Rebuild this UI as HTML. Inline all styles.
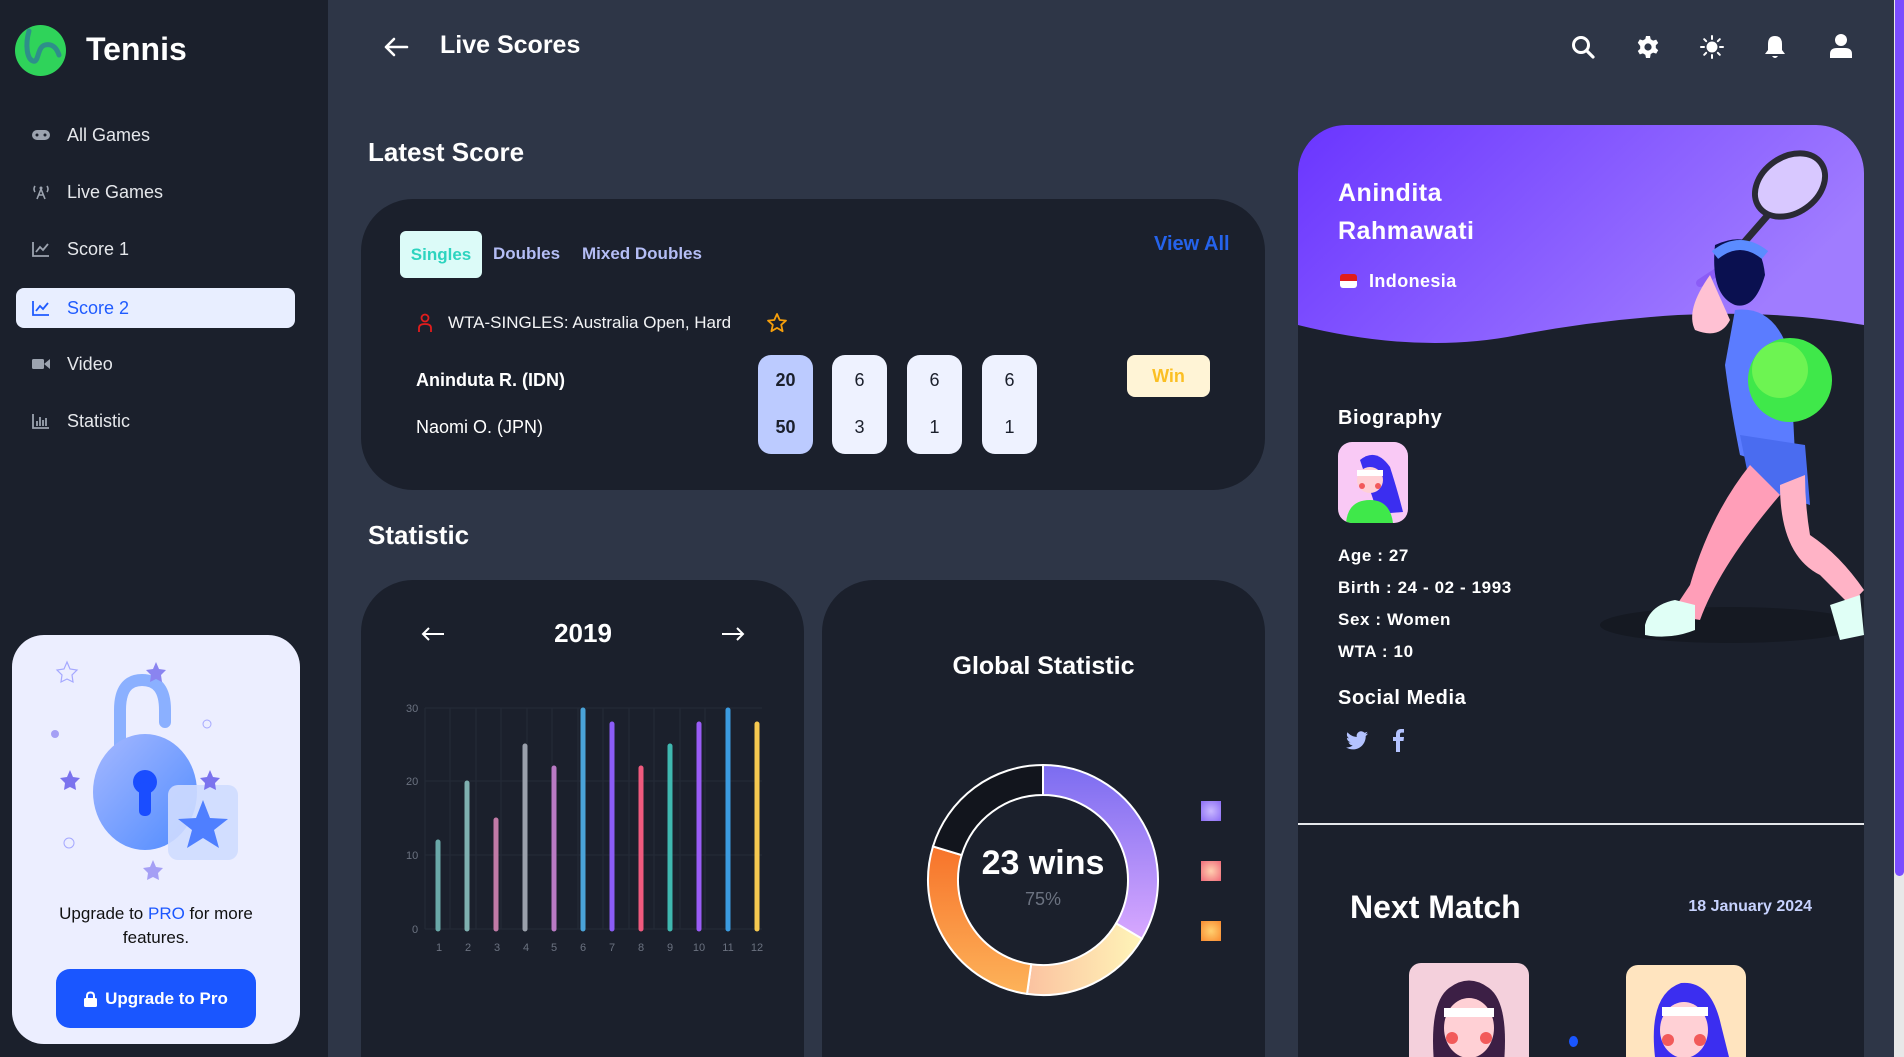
<!DOCTYPE html>
<html style="width:1904px;height:1057px;overflow:hidden"><head><meta charset="utf-8"><style>
*{margin:0;padding:0;box-sizing:border-box}
body{width:1904px;height:1057px;overflow:hidden;background:#2e3647;font-family:"Liberation Sans",sans-serif;color:#fff;position:relative}
.a{position:absolute}
.side{left:0;top:0;width:328px;height:1057px;background:#1b202c}
.nav{left:16px;width:279px;height:40px;border-radius:8px;display:flex;align-items:center;padding-left:16px;font-size:18px;color:#e5e7eb}
.nav svg{margin-right:17px}
.card{background:#1b202c}
.sb{width:55px;height:99px;border-radius:13px;background:#eef2ff;color:#1b202c;font-size:18px;text-align:center}
.sb div{position:absolute;left:0;width:100%}
.bio{left:1338px;font-size:17px;font-weight:bold;letter-spacing:.6px}
</style></head><body>
<div class="a side"></div>
<svg class="a" style="left:15px;top:25px" width="51" height="51" viewBox="0 0 51 51"><circle cx="25.5" cy="25.5" r="25.5" fill="#2fd35a"/><path d="M14 6 C10 20 12 34 18 36 C24 38 22 22 30 20 C38 18 42 24 44 30" stroke="#2e8f8a" stroke-width="5" fill="none" stroke-linecap="round"/></svg>
<div class="a" style="left:86px;top:31px;font-size:32px;font-weight:bold">Tennis</div>
<div class="a nav" style="top:115px"><svg width="18" height="12" viewBox="0 0 18 12"><rect x="0" y="1" width="18" height="10" rx="5" fill="#9ca3af"/><circle cx="5" cy="6" r="1.5" fill="#1b202c"/><circle cx="13" cy="6" r="1.5" fill="#1b202c"/></svg>All Games</div>
<div class="a nav" style="top:172px"><svg width="18" height="16" viewBox="0 0 18 16"><path d="M9 5 L5 15 M9 5 L13 15 M6.5 11 H11.5 M3 2 Q1 5 3 8 M15 2 Q17 5 15 8" stroke="#9ca3af" stroke-width="1.6" fill="none"/><circle cx="9" cy="4" r="1.5" fill="#9ca3af"/></svg>Live Games</div>
<div class="a nav" style="top:229px"><svg width="18" height="16" viewBox="0 0 18 16"><path d="M1 1 V15 H17 M4 11 L8 6 L11 9 L16 3" stroke="#9ca3af" stroke-width="1.8" fill="none"/></svg>Score 1</div>
<div class="a nav" style="top:288px;background:#e8eeff;color:#1f5bff"><svg width="18" height="16" viewBox="0 0 18 16"><path d="M1 1 V15 H17 M4 11 L8 6 L11 9 L16 3" stroke="#1f5bff" stroke-width="1.8" fill="none"/></svg>Score 2</div>
<div class="a nav" style="top:344px"><svg width="18" height="14" viewBox="0 0 18 14"><rect x="0" y="2" width="12" height="10" rx="1.5" fill="#9ca3af"/><path d="M12 7 L18 2 V12 Z" fill="#9ca3af"/></svg>Video</div>
<div class="a nav" style="top:401px"><svg width="18" height="16" viewBox="0 0 18 16"><path d="M1 1 V15 H17" stroke="#9ca3af" stroke-width="1.8" fill="none"/><path d="M5 13V8M8 13V4M11 13V7M14 13V5" stroke="#9ca3af" stroke-width="1.8"/></svg>Statistic</div>
<div class="a" style="left:12px;top:635px;width:288px;height:409px;border-radius:32px;background:#eceeff"></div>
<svg class="a" style="left:40px;top:650px" width="230" height="240" viewBox="0 0 230 240">
<defs><linearGradient id="lk" x1="0" y1="0" x2="1" y2="1"><stop offset="0" stop-color="#a5b8ff"/><stop offset="1" stop-color="#4f8bff"/></linearGradient></defs>
<path d="M80 130 V60 Q80 30 102 30 Q125 30 125 60 V72" stroke="#8bb0ff" stroke-width="12" fill="none" stroke-linecap="round"/>
<ellipse cx="105" cy="142" rx="52" ry="58" fill="url(#lk)"/>
<circle cx="105" cy="132" r="12" fill="#1a4dff"/><rect x="99" y="132" width="12" height="34" rx="5" fill="#1a4dff"/>
<rect x="128" y="135" width="70" height="75" rx="10" fill="#cfdcff" opacity=".9"/>
<path d="M163 150 L170 168 L188 169 L174 180 L179 198 L163 188 L147 198 L152 180 L138 169 L156 168 Z" fill="#4f7fff"/>
<path d="M27 12 l3 7 7 1 -5 5 1 7 -6 -3 -6 3 1 -7 -5 -5 7 -1z" fill="none" stroke="#a5a8ff" stroke-width="1.2"/>
<path d="M116 12 l3 7 7 1 -5 5 1 7 -6 -3 -6 3 1 -7 -5 -5 7 -1z" fill="#8a84f0"/>
<path d="M30 120 l3 7 7 1 -5 5 1 7 -6 -3 -6 3 1 -7 -5 -5 7 -1z" fill="#7b73ee"/>
<path d="M170 120 l3 7 7 1 -5 5 1 7 -6 -3 -6 3 1 -7 -5 -5 7 -1z" fill="#7b73ee"/>
<path d="M113 210 l3 7 7 1 -5 5 1 7 -6 -3 -6 3 1 -7 -5 -5 7 -1z" fill="#a59ff5"/>
<circle cx="15" cy="84" r="4" fill="#a59ff5"/><circle cx="167" cy="74" r="4" fill="none" stroke="#a5a8ff"/><circle cx="29" cy="193" r="5" fill="none" stroke="#a5a8ff"/>
</svg>
<div class="a" style="left:12px;width:288px;top:902px;text-align:center;font-size:17px;line-height:24px;color:#111">Upgrade to <span style="color:#1a56ff">PRO</span> for more<br>features.</div>
<div class="a" style="left:56px;top:969px;width:200px;height:59px;border-radius:14px;background:#1a56ff;display:flex;align-items:center;justify-content:center;font-size:17px;font-weight:bold"><svg width="13" height="16" viewBox="0 0 13 16" style="margin-right:8px"><rect x="0" y="7" width="13" height="9" rx="1.5" fill="#fff"/><path d="M3 7 V5 Q3 1.5 6.5 1.5 Q10 1.5 10 5 V7" stroke="#fff" stroke-width="2" fill="none"/></svg>Upgrade to Pro</div>
<svg class="a" style="left:383px;top:37px" width="26" height="20" viewBox="0 0 26 20"><path d="M24 10 H3 M11 2 L3 10 L11 18" stroke="#fff" stroke-width="2.6" fill="none" stroke-linecap="round" stroke-linejoin="round"/></svg>
<div class="a" style="left:440px;top:31px;font-size:25px;font-weight:bold">Live Scores</div>
<svg class="a" style="left:1570px;top:34px" width="26" height="26" viewBox="0 0 26 26"><circle cx="11" cy="11" r="7.5" stroke="#fff" stroke-width="3" fill="none"/><path d="M16.5 16.5 L23 23" stroke="#fff" stroke-width="3.2" stroke-linecap="round"/></svg>
<svg class="a" style="left:1636px;top:35px" width="24" height="24" viewBox="0 0 24 24"><path d="M10 1h4l.7 3.2 2.4 1.4 3.1-1 2 3.4-2.4 2.2v2.8l2.4 2.2-2 3.4-3.1-1-2.4 1.4L14 23h-4l-.7-3.2-2.4-1.4-3.1 1-2-3.4 2.4-2.2v-2.8L1.8 7.8l2-3.4 3.1 1 2.4-1.4z" fill="#fff"/><circle cx="12" cy="12" r="3.6" fill="#2e3647"/></svg>
<svg class="a" style="left:1700px;top:35px" width="24" height="24" viewBox="0 0 24 24"><circle cx="12" cy="12" r="5.5" fill="#fff"/><path d="M12 1v3M12 20v3M1 12h3M20 12h3M4.2 4.2l2 2M17.8 17.8l2 2M4.2 19.8l2-2M17.8 6.2l2-2" stroke="#fff" stroke-width="2" stroke-linecap="round"/></svg>
<svg class="a" style="left:1763px;top:34px" width="24" height="26" viewBox="0 0 24 26"><path d="M12 2 Q19 2 19 10 V16 L22 20 H2 L5 16 V10 Q5 2 12 2Z" fill="#fff"/><path d="M9 22 Q12 26 15 22Z" fill="#fff"/></svg>
<svg class="a" style="left:1829px;top:33px" width="24" height="26" viewBox="0 0 24 26"><circle cx="12" cy="7" r="6" fill="#fff"/><path d="M1 25 V21 Q1 15 8 15 H16 Q23 15 23 21 V25Z" fill="#fff"/></svg>
<div class="a" style="left:368px;top:137px;font-size:26px;font-weight:bold">Latest Score</div>
<div class="a card" style="left:361px;top:199px;width:904px;height:291px;border-radius:52px"></div>
<div class="a" style="left:400px;top:231px;width:82px;height:47px;border-radius:6px;background:#dcfbf8;color:#2dd4bf;font-size:17px;font-weight:bold;text-align:center;line-height:47px">Singles</div>
<div class="a" style="left:493px;top:244px;font-size:17px;font-weight:bold;color:#b4bdf5">Doubles</div>
<div class="a" style="left:582px;top:244px;font-size:17px;font-weight:bold;color:#b4bdf5">Mixed Doubles</div>
<div class="a" style="left:1154px;top:233px;font-size:20px;font-weight:bold;color:#2563eb">View All</div>
<svg class="a" style="left:417px;top:313px" width="16" height="20" viewBox="0 0 16 20"><circle cx="8" cy="5" r="3.5" stroke="#e11d1d" stroke-width="1.8" fill="none"/><path d="M2 19 V15 Q2 11 8 11 Q14 11 14 15 V19" stroke="#e11d1d" stroke-width="1.8" fill="none"/></svg>
<div class="a" style="left:448px;top:313px;font-size:17px;color:#f3f4f6">WTA-SINGLES: Australia Open, Hard</div>
<svg class="a" style="left:766px;top:312px" width="22" height="22" viewBox="0 0 22 22"><path d="M11 2 l2.7 6 6.3 .6 -4.8 4.2 1.4 6.4 -5.6 -3.3 -5.6 3.3 1.4 -6.4 -4.8 -4.2 6.3 -.6z" fill="none" stroke="#f59e0b" stroke-width="1.8" stroke-linejoin="round"/></svg>
<div class="a" style="left:416px;top:370px;font-size:18px;font-weight:bold">Aninduta R. (IDN)</div>
<div class="a" style="left:416px;top:417px;font-size:18px">Naomi O. (JPN)</div>
<div class="a sb" style="left:758px;top:355px;background:#bccbff;font-weight:bold"><div style="top:15px">20</div><div style="top:62px">50</div></div>
<div class="a sb" style="left:832px;top:355px"><div style="top:15px">6</div><div style="top:62px">3</div></div>
<div class="a sb" style="left:907px;top:355px"><div style="top:15px">6</div><div style="top:62px">1</div></div>
<div class="a sb" style="left:982px;top:355px"><div style="top:15px">6</div><div style="top:62px">1</div></div>
<div class="a" style="left:1127px;top:355px;width:83px;height:42px;border-radius:8px;background:#fff4d6;color:#fbbf24;font-size:18px;font-weight:bold;text-align:center;line-height:42px">Win</div>
<div class="a" style="left:368px;top:520px;font-size:26px;font-weight:bold">Statistic</div>
<div class="a card" style="left:361px;top:580px;width:443px;height:477px;border-radius:52px 52px 0 0"></div>
<div class="a card" style="left:822px;top:580px;width:443px;height:477px;border-radius:52px 52px 0 0"></div>
<svg class="a" style="left:420px;top:624px" width="26" height="20" viewBox="0 0 26 20"><path d="M24 10 H3 M9 4 L3 10 L9 16" stroke="#fff" stroke-width="2" fill="none"/></svg>
<svg class="a" style="left:720px;top:624px" width="26" height="20" viewBox="0 0 26 20"><path d="M2 10 H23 M17 4 L23 10 L17 16" stroke="#fff" stroke-width="2" fill="none"/></svg>
<div class="a" style="left:533px;top:618px;width:100px;text-align:center;font-size:26px;font-weight:bold">2019</div>
<svg class="a" style="left:390px;top:690px" width="380" height="270" viewBox="0 0 380 270">
<g stroke="#252b38" stroke-width="1"><line x1="35" y1="18" x2="372" y2="18"/><line x1="35" y1="91" x2="372" y2="91"/><line x1="35" y1="165" x2="372" y2="165"/><line x1="35" y1="239" x2="372" y2="239"/>
<line x1="35" y1="18" x2="35" y2="239"/><line x1="60" y1="18" x2="60" y2="239"/><line x1="86" y1="18" x2="86" y2="239"/><line x1="111" y1="18" x2="111" y2="239"/><line x1="137" y1="18" x2="137" y2="239"/><line x1="162" y1="18" x2="162" y2="239"/><line x1="188" y1="18" x2="188" y2="239"/><line x1="213" y1="18" x2="213" y2="239"/><line x1="239" y1="18" x2="239" y2="239"/><line x1="264" y1="18" x2="264" y2="239"/><line x1="290" y1="18" x2="290" y2="239"/><line x1="315" y1="18" x2="315" y2="239"/><line x1="340" y1="18" x2="340" y2="239"/></g>
<g font-size="11" fill="#6b7280" font-family="Liberation Sans"><text x="16" y="22">30</text><text x="16" y="95">20</text><text x="16" y="169">10</text><text x="22" y="243">0</text></g>
<g stroke-width="5" stroke-linecap="round">
<line x1="48" y1="239" x2="48" y2="152" stroke="#6aa8a8"/>
<line x1="77" y1="239" x2="77" y2="93" stroke="#7fb0b0"/>
<line x1="106" y1="239" x2="106" y2="130" stroke="#c07aa6"/>
<line x1="135" y1="239" x2="135" y2="56" stroke="#9aa0ab"/>
<line x1="164" y1="239" x2="164" y2="78" stroke="#b97ac4"/>
<line x1="193" y1="239" x2="193" y2="20" stroke="#4aa3d8"/>
<line x1="222" y1="239" x2="222" y2="34" stroke="#8b5cf6"/>
<line x1="251" y1="239" x2="251" y2="78" stroke="#f05a7e"/>
<line x1="280" y1="239" x2="280" y2="56" stroke="#3fb8b0"/>
<line x1="309" y1="239" x2="309" y2="34" stroke="#9a5cf6"/>
<line x1="338" y1="239" x2="338" y2="20" stroke="#3b9be0"/>
<line x1="367" y1="239" x2="367" y2="34" stroke="#f6c950"/></g>
<g font-size="11" fill="#6b7280" font-family="Liberation Sans" text-anchor="middle"><text x="49" y="261">1</text><text x="78" y="261">2</text><text x="107" y="261">3</text><text x="136" y="261">4</text><text x="164" y="261">5</text><text x="193" y="261">6</text><text x="222" y="261">7</text><text x="251" y="261">8</text><text x="280" y="261">9</text><text x="309" y="261">10</text><text x="338" y="261">11</text><text x="367" y="261">12</text></g>
</svg>
<div class="a" style="left:822px;width:443px;top:652px;text-align:center;font-size:25px;font-weight:bold">Global Statistic</div>
<svg class="a" style="left:923px;top:760px" width="240" height="240" viewBox="-120 -120 240 240">
<defs>
<linearGradient id="gp" x1="0" y1="0" x2="0" y2="1"><stop offset="0" stop-color="#7b6cf0"/><stop offset="1" stop-color="#d8a8ff"/></linearGradient>
<linearGradient id="gy" x1="1" y1="0" x2="0" y2="0"><stop offset="0" stop-color="#fff5b8"/><stop offset="1" stop-color="#fbc2a0"/></linearGradient>
<linearGradient id="go" x1="0" y1="0" x2="0" y2="1"><stop offset="0" stop-color="#f7732a"/><stop offset="1" stop-color="#fdb35a"/></linearGradient>
</defs>
<g stroke="#fff" stroke-width="2">
<path d="M0 -115 A115 115 0 0 1 98.9 58.7 L73.1 43.4 A85 85 0 0 0 0 -85Z" fill="url(#gp)"/>
<path d="M98.9 58.7 A115 115 0 0 1 -16 113.9 L-11.8 84.2 A85 85 0 0 0 73.1 43.4Z" fill="url(#gy)"/>
<path d="M-16 113.9 A115 115 0 0 1 -110 -33.6 L-81.3 -24.9 A85 85 0 0 0 -11.8 84.2Z" fill="url(#go)"/>
<path d="M-110 -33.6 A115 115 0 0 1 0 -115 L0 -85 A85 85 0 0 0 -81.3 -24.9Z" fill="#12151d"/>
</g></svg>
<div class="a" style="left:943px;width:200px;top:844px;text-align:center;font-size:34px;font-weight:bold">23 wins</div>
<div class="a" style="left:943px;width:200px;top:889px;text-align:center;font-size:18px;color:#6b7280">75%</div>
<div class="a" style="left:1201px;top:801px;width:20px;height:20px;background:radial-gradient(#c9b8ff,#8b6cf5)"></div>
<div class="a" style="left:1201px;top:861px;width:20px;height:20px;background:radial-gradient(#ffd0b0,#f06a7a)"></div>
<div class="a" style="left:1201px;top:921px;width:20px;height:20px;background:radial-gradient(#ffd070,#f98a30)"></div>
<div class="a card" style="left:1298px;top:125px;width:566px;height:932px;border-radius:48px 48px 0 0;overflow:hidden">
<svg width="566" height="240" viewBox="0 0 566 240" style="position:absolute;left:0;top:0"><defs><linearGradient id="pu" x1="0" y1="0" x2="1" y2="0.4"><stop offset="0" stop-color="#6a35ff"/><stop offset="1" stop-color="#a07cff"/></linearGradient></defs><path d="M0 0 H566 V200 Q480 185 380 190 Q300 195 220 210 Q120 230 0 200Z" fill="url(#pu)"/></svg>
</div>
<div class="a" style="left:1298px;top:823px;width:566px;height:2px;background:#e5e7eb"></div>
<div class="a" style="left:1338px;top:174px;font-size:25px;font-weight:bold;line-height:38px;letter-spacing:.5px">Anindita<br>Rahmawati</div>
<div class="a" style="left:1340px;top:274px;width:17px;height:14px;border-radius:3px;overflow:hidden"><div style="height:7px;background:#e11d1d"></div><div style="height:7px;background:#fff"></div></div>
<div class="a" style="left:1369px;top:271px;font-size:18px;font-weight:bold;letter-spacing:.4px">Indonesia</div>
<svg class="a" style="left:1590px;top:135px" width="274" height="520" viewBox="0 0 274 520">
<ellipse cx="140" cy="490" rx="130" ry="18" fill="#151922"/>
<ellipse cx="200" cy="50" rx="38" ry="28" transform="rotate(-35 200 50)" fill="#d8c8ff" stroke="#2a2a35" stroke-width="6"/>
<path d="M178 80 L130 135" stroke="#2a2a35" stroke-width="7"/>
<path d="M130 135 L110 148" stroke="#8b5cf6" stroke-width="8" stroke-linecap="round"/>
<path d="M120 140 Q95 175 105 195 Q130 205 140 185" fill="#ffc1d3"/>
<path d="M125 110 Q170 90 175 140 Q165 175 145 170 Q120 160 125 110Z" fill="#0a1050"/>
<path d="M125 120 Q150 100 175 120" stroke="#5b8cff" stroke-width="10" fill="none"/>
<path d="M145 175 Q185 170 200 220 L205 320 Q175 330 150 320 Q140 270 135 230Z" fill="#5b7cff"/>
<circle cx="200" cy="245" r="42" fill="#3fe84a"/><circle cx="190" cy="235" r="28" fill="#9bff5a" opacity=".5"/>
<path d="M150 300 L215 310 L220 370 L160 350Z" fill="#4a6cf0"/>
<path d="M160 330 Q120 380 100 450 L80 480 L110 485 Q130 430 190 360Z" fill="#ff9eb8"/>
<path d="M190 350 Q190 420 230 440 L260 470 L274 455 Q250 420 220 400 Q215 370 215 340Z" fill="#ffb3c6"/>
<path d="M55 490 Q60 470 85 465 L105 470 L105 495 Q80 505 55 500Z" fill="#e0fff6"/>
<path d="M240 470 L270 460 L274 500 L250 505Z" fill="#e0fff6"/>
</svg>
<div class="a bio" style="top:407px;font-size:20px">Biography</div>
<div class="a" style="left:1338px;top:442px;width:70px;height:81px;border-radius:14px;background:#f9c9f5;overflow:hidden"><svg width="70" height="81" viewBox="0 0 70 81"><path d="M22 18 Q38 5 52 25 Q60 50 65 70 L40 72 Z" fill="#3b2ef0"/><circle cx="32" cy="38" r="13" fill="#ffd0d5"/><rect x="19" y="28" width="26" height="6" fill="#fff"/><circle cx="24" cy="44" r="3" fill="#f25a5a"/><circle cx="40" cy="44" r="3" fill="#f25a5a"/><path d="M8 81 Q10 58 32 58 Q52 58 55 81Z" fill="#3fe84a"/></svg></div>
<div class="a bio" style="top:546px">Age : 27</div>
<div class="a bio" style="top:578px">Birth : 24 - 02 - 1993</div>
<div class="a bio" style="top:610px">Sex : Women</div>
<div class="a bio" style="top:642px">WTA : 10</div>
<div class="a bio" style="top:687px;font-size:20px">Social Media</div>
<svg class="a" style="left:1345px;top:731px" width="24" height="20" viewBox="0 0 24 20"><path d="M23 2.5c-.8.4-1.7.6-2.6.7.9-.6 1.6-1.4 2-2.5-.9.5-1.900.9-2.9 1.1A4.5 4.5 0 0 0 11.8 6C8 5.8 4.7 4 2.5 1.3c-1.2 2-.6 4.6 1.4 6-.7 0-1.4-.2-2-.6 0 2.2 1.6 4.1 3.6 4.5-.7.2-1.4.2-2 .1.6 1.8 2.3 3.1 4.2 3.1A9 9 0 0 1 1 16.4 12.8 12.8 0 0 0 7.9 18.4c8.3 0 12.8-6.9 12.8-12.8v-.6c.9-.7 1.7-1.5 2.3-2.5z" fill="#b4c3ff"/></svg>
<svg class="a" style="left:1391px;top:728px" width="14" height="24" viewBox="0 0 14 24"><path d="M9 24V13h3.5l.5-4H9V6.5C9 5.4 9.3 4.6 11 4.6h2V1.1C12.6 1 11.4 1 10 1 7.1 1 5 2.8 5 6v3H2v4h3v11z" fill="#b4c3ff"/></svg>
<div class="a" style="left:1350px;top:889px;font-size:32px;font-weight:bold">Next Match</div>
<div class="a" style="left:1640px;width:172px;text-align:right;top:898px;font-size:16px;font-weight:bold;color:#c7d2fe">18 January 2024</div>
<div class="a" style="left:1409px;top:963px;width:120px;height:94px;border-radius:12px 12px 0 0;background:#f4d0dc;overflow:hidden"><svg width="120" height="100" viewBox="0 0 120 100"><path d="M25 100 Q20 40 40 25 Q60 10 80 25 Q100 40 95 100Z" fill="#3c1f45"/><ellipse cx="60" cy="65" rx="25" ry="30" fill="#ffd0d5"/><rect x="35" y="45" width="50" height="9" fill="#fff"/><circle cx="43" cy="75" r="6" fill="#f25a5a"/><circle cx="77" cy="75" r="6" fill="#f25a5a"/></svg></div>
<div class="a" style="left:1626px;top:965px;width:120px;height:92px;border-radius:12px 12px 0 0;background:#ffe4bf;overflow:hidden"><svg width="120" height="100" viewBox="0 0 120 100"><path d="M30 100 Q20 30 55 18 Q85 15 95 60 L105 100Z" fill="#3b2ef0"/><ellipse cx="58" cy="65" rx="24" ry="28" fill="#ffd0d5"/><rect x="36" y="42" width="46" height="9" fill="#fff"/><circle cx="42" cy="75" r="6" fill="#f25a5a"/><circle cx="74" cy="75" r="6" fill="#f25a5a"/></svg></div>
<div class="a" style="left:1569px;top:1036px;width:9px;height:11px;border-radius:50%;background:#1a56ff"></div>
<div class="a" style="left:1894px;top:0;width:10px;height:1057px;background:#e8e8e8"></div>
<div class="a" style="left:1895px;top:0;width:9px;height:876px;border-radius:0 0 5px 5px;background:#7b4dff"></div>
</body></html>
